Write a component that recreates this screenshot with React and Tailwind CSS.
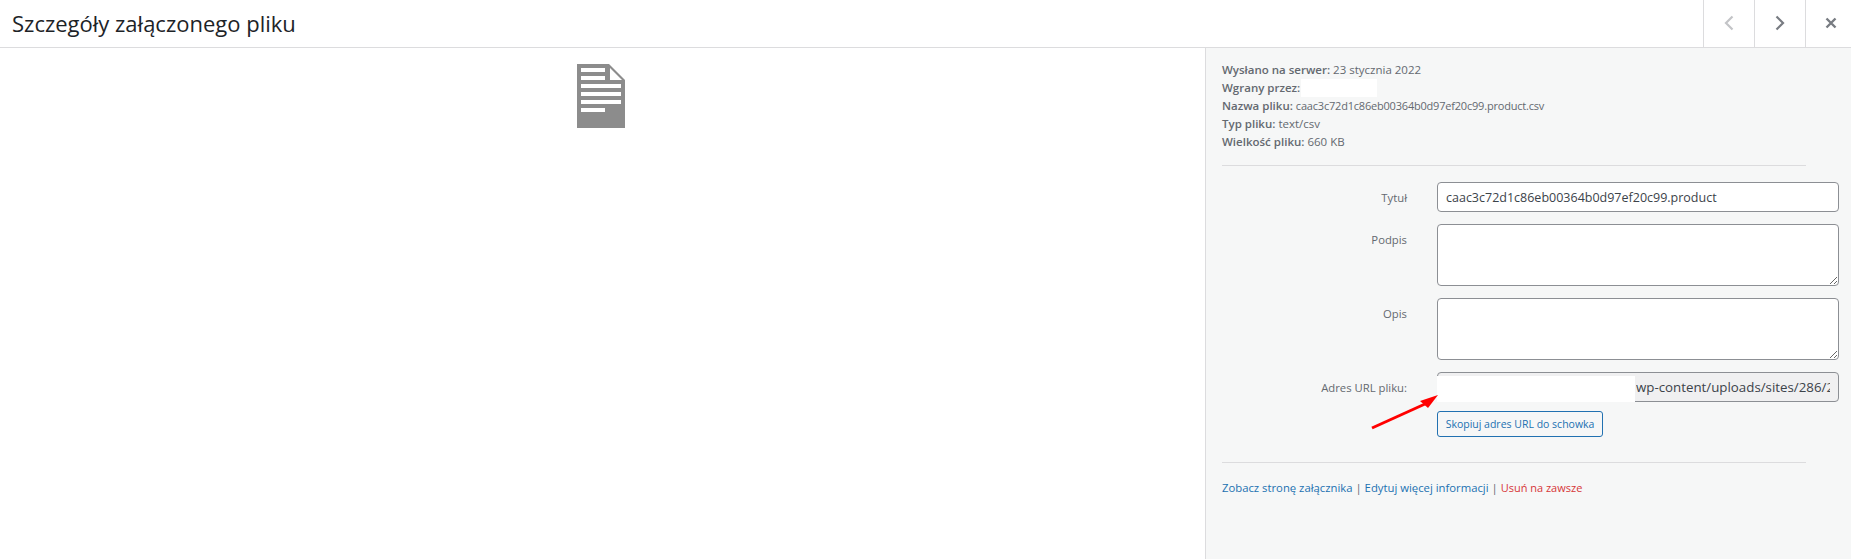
const font = { fontFamily: '"Open Sans", "Noto Sans", sans-serif' };

function Field({ label, children }) {
  return (
    <div className="flex gap-[30px]">
      <label className="w-[185px] shrink-0 pt-[7px] text-right text-[11.3px] leading-[18px] text-[#646970]">{label}</label>
      <div className="relative w-[402px]">{children}</div>
    </div>
  );
}

const inputCls = "block w-full rounded-[4px] border border-[#8c8f94] bg-white px-[8px] text-[12.5px] text-[#3c434a] outline-none";

function NavButton({ children }) {
  return <button className="flex h-[47px] w-[51px] items-center justify-center border-l border-[#dcdcde] bg-white pb-[2px]">{children}</button>;
}

export default function App() {
  return (
    <div className="flex h-[559px] w-[1851px] flex-col overflow-hidden bg-white" style={font}>
      <header className="flex h-[48px] shrink-0 items-center justify-between border-b border-[#dcdcde]">
        <h1 className="pb-[1px] pl-[12px] text-[22px] leading-[47px] font-normal text-[#1d2327]">Szczegóły załączonego pliku</h1>
        <div className="mr-[-5px] flex">
          <NavButton>
            <svg width="10" height="16" viewBox="0 0 10 16" fill="none" stroke="#c3c4c7" strokeWidth="2.2"><path d="M8.5 1.5 2 8l6.5 6.5" /></svg>
          </NavButton>
          <NavButton>
            <svg width="10" height="16" viewBox="0 0 10 16" fill="none" stroke="#787c82" strokeWidth="2.2"><path d="M1.5 1.5 8 8l-6.5 6.5" /></svg>
          </NavButton>
          <NavButton>
            <svg width="12" height="12" viewBox="0 0 12 12" fill="none" stroke="#787c82" strokeWidth="2.4"><path d="M1.5 1.5l9 9M10.5 1.5l-9 9" /></svg>
          </NavButton>
        </div>
      </header>
      <div className="flex min-h-0 flex-1">
        <main className="flex flex-1 justify-center pt-[16px] pr-[3px]">
          <svg width="48" height="64" viewBox="0 0 48 64" className="block">
            <path d="M0 0H32L48 16V64H0Z" fill="#8c8c8c" />
            <path d="M33 4V16H45Z" fill="#fff" />
            <rect x="4" y="4" width="24" height="4" fill="#fff" />
            <rect x="4" y="12" width="24" height="4" fill="#fff" />
            <rect x="4" y="20" width="40" height="4" fill="#fff" />
            <rect x="4" y="28" width="40" height="4" fill="#fff" />
            <rect x="4" y="36" width="40" height="4" fill="#fff" />
            <rect x="4" y="44" width="24" height="4" fill="#fff" />
          </svg>
        </main>
        <aside className="w-[646px] shrink-0 border-l border-[#dcdcde] bg-[#f6f7f7] pt-[13px] pl-[16px]">
          <div className="text-[11.5px] leading-[18px] text-[#646970]">
            <div><strong className="font-semibold">Wysłano na serwer:</strong> 23 stycznia 2022</div>
            <div className="flex">
              <strong className="font-semibold">Wgrany przez:</strong>
              <span className="ml-[1px] h-[18px] w-[76px] bg-white" />
            </div>
            <div><strong className="font-semibold">Nazwa pliku:</strong> <span className="text-[11px] tracking-[-0.2px]">caac3c72d1c86eb00364b0d97ef20c99.product.csv</span></div>
            <div><strong className="font-semibold">Typ pliku:</strong> text/csv</div>
            <div><strong className="font-semibold">Wielkość pliku:</strong> 660 KB</div>
          </div>
          <div className="mt-[14px] mb-[16px] h-px w-[584px] bg-[#dcdcde]" />
          <div className="flex flex-col gap-[12px]">
            <Field label="Tytuł">
              <input readOnly value="caac3c72d1c86eb00364b0d97ef20c99.product" className={`${inputCls} h-[30px]`} />
            </Field>
            <Field label="Podpis">
              <textarea className={`${inputCls} h-[62px]`} />
            </Field>
            <Field label="Opis">
              <textarea className={`${inputCls} h-[62px]`} />
            </Field>
            <Field label="Adres URL pliku:">
              <input readOnly value="wp-content/uploads/sites/286/2022/01/caac3c72d1c86eb00364b0d97ef20c99.product.csv" className="block h-[30px] w-full rounded-[4px] border border-[#8c8f94] bg-[#f0f0f1] pr-[8px] pl-[198px] text-[13.3px] text-[#3c434a] outline-none" />
              <div className="absolute top-[4px] left-0 h-[26px] w-[198px] bg-white" />
              <svg width="80" height="45" viewBox="0 0 80 45" className="absolute top-[18px] left-[-72px]">
                <path d="M7 38 60 14" stroke="#f00" strokeWidth="3" />
                <path d="M73 5 55 11 63 18Z" fill="#f00" />
              </svg>
              <button className="mt-[9px] block h-[26px] w-[166px] rounded-[3px] border border-[#2271b1] bg-[#f6f7f7] text-center text-[10.5px] leading-[24px] whitespace-nowrap text-[#2271b1]">Skopiuj adres URL do schowka</button>
            </Field>
          </div>
          <div className="mt-[25px] mb-[16px] h-px w-[584px] bg-[#dcdcde]" />
          <div className="text-[11.3px] leading-[18px] text-[#646970]">
            <a className="text-[#2271b1]">Zobacz stronę załącznika</a> | <a className="text-[#2271b1]">Edytuj więcej informacji</a> | <a className="text-[11px] text-[#d63638]">Usuń na zawsze</a>
          </div>
        </aside>
      </div>
    </div>
  );
}
